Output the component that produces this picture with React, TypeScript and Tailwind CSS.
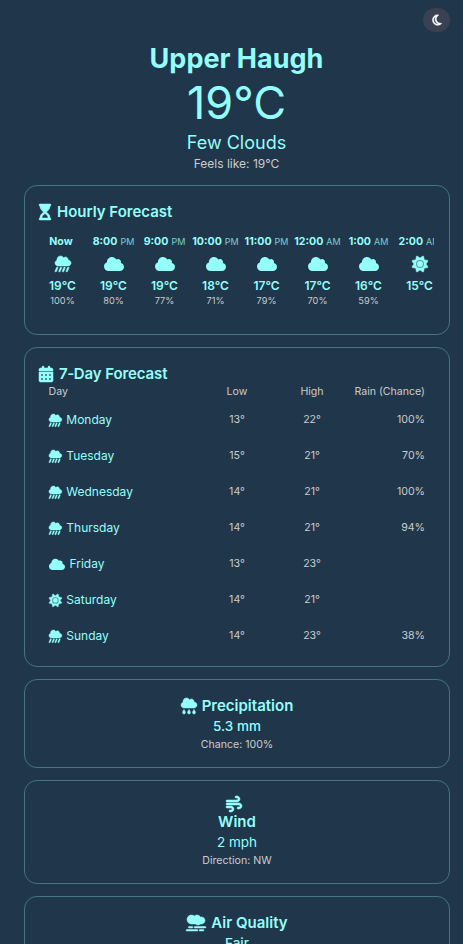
import React from "react";
import { FaCloud, FaCloudRain, FaCloudShowersHeavy, FaSun, FaWind, FaSmog, FaCalendarDays, FaHourglassStart, FaRegMoon } from "react-icons/fa6";

type Sky = "rain" | "cloud" | "sun";

const skyIcons = { rain: FaCloudShowersHeavy, cloud: FaCloud, sun: FaSun };
const skyStroke = { rain: 18, cloud: 0, sun: 18 };
const hourIconSize = { rain: "h-4 w-4", cloud: "h-4 w-5", sun: "h-4 w-4" };
const dayIconSize = { rain: "h-[12.8px] w-[12.8px]", cloud: "h-[12.8px] w-4", sun: "h-[12.8px] w-[12.8px]" };

const hours: { time: string; half?: string; sky: Sky; temp: number; chance?: number }[] = [
  { time: "Now", sky: "rain", temp: 19, chance: 100 },
  { time: "8:00", half: "PM", sky: "cloud", temp: 19, chance: 80 },
  { time: "9:00", half: "PM", sky: "cloud", temp: 19, chance: 77 },
  { time: "10:00", half: "PM", sky: "cloud", temp: 18, chance: 71 },
  { time: "11:00", half: "PM", sky: "cloud", temp: 17, chance: 79 },
  { time: "12:00", half: "AM", sky: "cloud", temp: 17, chance: 70 },
  { time: "1:00", half: "AM", sky: "cloud", temp: 16, chance: 59 },
  { time: "2:00", half: "AM", sky: "sun", temp: 15 },
];

const days: { day: string; sky: Sky; low: number; high: number; rain?: number }[] = [
  { day: "Monday", sky: "rain", low: 13, high: 22, rain: 100 },
  { day: "Tuesday", sky: "rain", low: 15, high: 21, rain: 70 },
  { day: "Wednesday", sky: "rain", low: 14, high: 21, rain: 100 },
  { day: "Thursday", sky: "rain", low: 14, high: 21, rain: 94 },
  { day: "Friday", sky: "cloud", low: 13, high: 23 },
  { day: "Saturday", sky: "sun", low: 14, high: 21 },
  { day: "Sunday", sky: "rain", low: 14, high: 23, rain: 38 },
];

function Card({ className, children }: { className: string; children: React.ReactNode }) {
  return <section className={`w-[426px] shrink-0 rounded-[13px] border border-[#437582] ${className}`}>{children}</section>;
}

export default function App() {
  return (
    <div className="h-[944px] w-[463px] overflow-hidden bg-[#20364b] pl-6 font-['Inter',sans-serif] text-[#94fffa]">
      <header className="flex h-10 w-[426px] justify-end pt-2">
        <button className="flex h-6 w-[27px] items-center justify-center rounded-full bg-[#394152] text-white">
          <FaRegMoon strokeWidth={24} className="h-3 w-[10px] overflow-visible" />
        </button>
      </header>

      <div className="flex h-[145px] w-[425px] flex-col items-center">
        <h1 className="h-9 pt-px text-[27px] leading-9 font-bold">Upper Haugh</h1>
        <p className="h-[54px] text-[45px] leading-[54px]">19°C</p>
        <p className="mt-px h-6 text-[18px] leading-6">Few Clouds</p>
        <p className="h-[17px] text-[12px] leading-[17px] text-[#cccccc]">Feels like: 19°C</p>
      </div>

      <main className="flex flex-col gap-3">
        <Card className="h-[150px] px-[14px] pt-4">
          <h2 className="flex h-5 items-center gap-[6px] text-[15px] font-semibold">
            <FaHourglassStart strokeWidth={16} className="h-4 w-3 overflow-visible" />
            Hourly Forecast
          </h2>
          <div className="mt-3 mr-px flex overflow-hidden">
            {hours.map((h) => {
              const Icon = skyIcons[h.sky];
              return (
                <div key={h.time} className="flex w-[51px] shrink-0 flex-col items-center first:-ml-[2px]">
                  <div className="h-4 text-[10.6px] leading-4 font-bold whitespace-nowrap">
                    {h.time}
                    <span className="ml-[3px] text-[9px] font-normal opacity-75">{h.half}</span>
                  </div>
                  <Icon strokeWidth={skyStroke[h.sky]} className={`mt-1.5 overflow-visible ${hourIconSize[h.sky]}`} />
                  <div className="mt-1.5 h-4 text-[12px] leading-4 font-semibold">{h.temp}°C</div>
                  <div className="h-[14px] text-[9.2px] leading-[14px] text-[#cccccc]">{h.chance && `${h.chance}%`}</div>
                </div>
              );
            })}
          </div>
        </Card>

        <Card className="h-[320px] px-[14px] pt-4">
          <h2 className="flex h-5 items-center gap-[6px] text-[15px] font-semibold">
            <FaCalendarDays strokeWidth={16} className="h-4 w-3.5 overflow-visible" />
            <span className="tracking-[-0.1px]">7‑Day Forecast</span>
          </h2>
          <div className="pr-[10px] pl-[9.5px]">
            <div className="grid h-4 grid-cols-[151px_75px_75px_1fr] text-[10.6px] leading-4 text-[#cccccc]">
              <span>Day</span>
              <span className="text-center">Low</span>
              <span className="text-center">High</span>
              <span className="text-right">Rain (Chance)</span>
            </div>
            {days.map((d) => {
              const Icon = skyIcons[d.sky];
              return (
                <div key={d.day} className="grid h-9 grid-cols-[151px_75px_75px_1fr] items-center pt-1 text-[10.6px] text-[#cccccc]">
                  <span className="flex items-center gap-[5px] text-[12px] text-[#94fffa]">
                    <Icon strokeWidth={skyStroke[d.sky]} className={`overflow-visible ${dayIconSize[d.sky]}`} />
                    {d.day}
                  </span>
                  <span className="text-center">{d.low}°</span>
                  <span className="text-center">{d.high}°</span>
                  <span className="text-right">{d.rain && `${d.rain}%`}</span>
                </div>
              );
            })}
          </div>
        </Card>

        <Card className="flex h-[89px] flex-col items-center pt-4">
          <h2 className="flex h-5 items-center gap-[5px] text-[15px] font-semibold">
            <FaCloudRain strokeWidth={16} className="size-4 overflow-visible" />
            Precipitation
          </h2>
          <p className="h-[21px] text-[13.5px] leading-[21px] font-medium">5.3 mm</p>
          <p className="h-4 text-[10.6px] leading-4 text-[#cccccc]">Chance: 100%</p>
        </Card>

        <Card className="flex h-[104px] flex-col items-center pt-[15px]">
          <FaWind strokeWidth={18} className="mr-[6px] size-4 overflow-visible" />
          <h2 className="h-5 text-[15px] leading-5 font-semibold">Wind</h2>
          <p className="h-[21px] text-[13.5px] leading-[21px]">2 mph</p>
          <p className="h-4 text-[10.6px] leading-4 text-[#cccccc]">Direction: NW</p>
        </Card>

        <Card className="flex h-[89px] flex-col items-center pt-4">
          <h2 className="flex h-5 items-center gap-[5px] text-[15px] font-semibold">
            <FaSmog strokeWidth={16} className="h-4 w-5 overflow-visible" />
            Air Quality
          </h2>
          <p className="h-[21px] text-[13.5px] leading-[21px] font-medium">Fair</p>
        </Card>
      </main>
    </div>
  );
}
